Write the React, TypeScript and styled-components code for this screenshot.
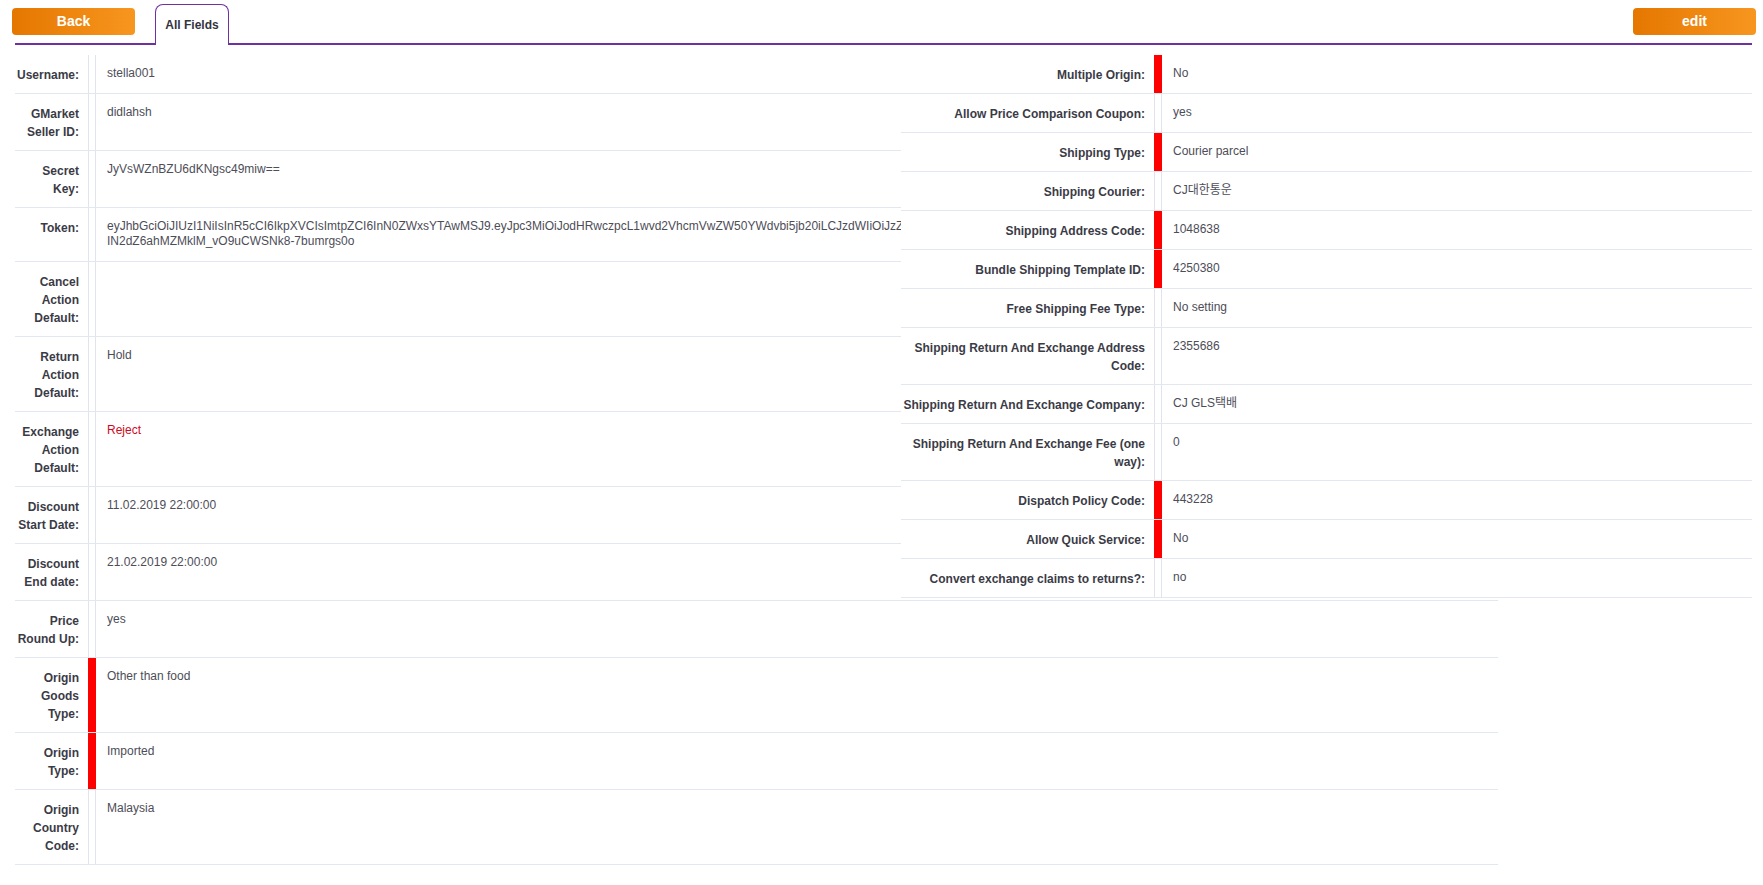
import React from "react";
import styled, { createGlobalStyle } from "styled-components";

const GlobalStyle = createGlobalStyle`
  html, body {
    margin: 0;
    padding: 0;
    background: #ffffff;
    font-family: "Liberation Sans", Arial, "Noto Sans CJK KR", sans-serif;
  }
  * { box-sizing: border-box; }
`;

const Page = styled.div`
  width: 100%;
  padding-bottom: 20px;
`;

const Header = styled.div`
  display: flex;
  align-items: flex-start;
  height: 45px;
  margin: 0 11px 0 15px;
  border-bottom: 2px solid #7030a0;
`;

const ActionButton = styled.button<{ $edge: "left" | "right" }>`
  width: 123px;
  height: 27px;
  margin-top: 8px;
  ${(p) => (p.$edge === "left" ? "margin-left: -3px;" : "margin-left: auto; margin-right: -4px;")}
  border: none;
  border-radius: 4px;
  background: linear-gradient(to right, #e57700, #f7961f);
  color: #ffffff;
  font-family: "Liberation Sans", Arial, sans-serif;
  font-weight: bold;
  font-size: 14px;
  line-height: 27px;
  padding: 0 0 4px;
  cursor: pointer;
`;

const Tab = styled.div`
  margin-left: 20px;
  margin-top: 4px;
  height: 41px;
  width: 74px;
  border: 1.5px solid #7030a0;
  border-bottom: none;
  border-radius: 8px 8px 0 0;
  background: #ffffff;
  color: #333340;
  font-weight: bold;
  font-size: 12px;
  display: flex;
  justify-content: center;
  padding-top: 13px;
  position: relative;
  z-index: 1;
`;

const Layout = styled.div`
  display: grid;
  grid-template-columns: 886px 597px 254px;
  margin: 10px 11px 0 15px;
  align-items: start;
`;

const LeftTable = styled.div`
  grid-column: 1 / 3;
  grid-row: 1;
`;

const RightTable = styled.div`
  grid-column: 2 / 4;
  grid-row: 1;
  background: #ffffff;
  position: relative;
  z-index: 1;
`;

const Row = styled.div<{ $labelWidth: number }>`
  display: grid;
  grid-template-columns: ${(p) => p.$labelWidth}px 8px 1fr;
  border-bottom: 1px solid #e3e7ef;
`;

const Label = styled.div<{ $padLeft: number }>`
  text-align: right;
  font-weight: bold;
  font-size: 12px;
  line-height: 18px;
  color: #3b3b46;
  padding: 11px 9px 9px ${(p) => p.$padLeft}px;
`;

const Marker = styled.div<{ $required: boolean }>`
  border-left: 1px solid ${(p) => (p.$required ? "#ff0000" : "#dfe4ee")};
  border-right: 1px solid ${(p) => (p.$required ? "#ff0000" : "#dfe4ee")};
  background: ${(p) => (p.$required ? "#ff0000" : "#ffffff")};
`;

const Value = styled.div<{ $alert?: boolean }>`
  min-width: 0;
  font-size: 12px;
  line-height: 15px;
  color: ${(p) => (p.$alert ? "#cc0a1e" : "#4d4d58")};
  padding: 11px 12px 12px 11px;
  overflow-wrap: anywhere;
`;

type Field = { label: string; value: string; required?: boolean; alert?: boolean };

const token =
  "eyJhbGciOiJIUzI1NiIsInR5cCI6IkpXVCIsImtpZCI6InN0ZWxsYTAwMSJ9.eyJpc3MiOiJodHRwczpcL1wvd2VhcmVwZW50YWdvbi5jb20iLCJzdWIiOiJzZWxsZXIiLCJhdWQiOiJzYS5lc21wbHVzLmNvbSIsIm5iZiI6MTU0OTg5MjAwMH0.rX3a" +
  "\u200B" +
  "IN2dZ6ahMZMklM_vO9uCWSNk8-7bumrgs0o";

const leftFields: Field[] = [
  { label: "Username:", value: "stella001" },
  { label: "GMarket Seller ID:", value: "didlahsh" },
  { label: "Secret Key:", value: "JyVsWZnBZU6dKNgsc49miw==" },
  { label: "Token:", value: token },
  { label: "Cancel Action Default:", value: "" },
  { label: "Return Action Default:", value: "Hold" },
  { label: "Exchange Action Default:", value: "Reject", alert: true },
  { label: "Discount Start Date:", value: "11.02.2019 22:00:00" },
  { label: "Discount End date:", value: "21.02.2019 22:00:00" },
  { label: "Price Round Up:", value: "yes" },
  { label: "Origin Goods Type:", value: "Other than food", required: true },
  { label: "Origin Type:", value: "Imported", required: true },
  { label: "Origin Country Code:", value: "Malaysia" },
];

const rightFields: Field[] = [
  { label: "Multiple Origin:", value: "No", required: true },
  { label: "Allow Price Comparison Coupon:", value: "yes" },
  { label: "Shipping Type:", value: "Courier parcel", required: true },
  { label: "Shipping Courier:", value: "CJ대한통운" },
  { label: "Shipping Address Code:", value: "1048638", required: true },
  { label: "Bundle Shipping Template ID:", value: "4250380", required: true },
  { label: "Free Shipping Fee Type:", value: "No setting" },
  { label: "Shipping Return And Exchange Address Code:", value: "2355686" },
  { label: "Shipping Return And Exchange Company:", value: "CJ GLS택배" },
  { label: "Shipping Return And Exchange Fee (one way):", value: "0" },
  { label: "Dispatch Policy Code:", value: "443228", required: true },
  { label: "Allow Quick Service:", value: "No", required: true },
  { label: "Convert exchange claims to returns?:", value: "no" },
];

const FieldRows: React.FC<{ fields: Field[]; labelWidth: number; padLeft: number }> = ({
  fields,
  labelWidth,
  padLeft,
}) => (
  <>
    {fields.map((f) => (
      <Row key={f.label} $labelWidth={labelWidth}>
        <Label $padLeft={padLeft}>{f.label}</Label>
        <Marker $required={!!f.required} />
        <Value $alert={f.alert}>{f.value}</Value>
      </Row>
    ))}
  </>
);

export default function App() {
  return (
    <Page>
      <GlobalStyle />
      <Header>
        <ActionButton $edge="left">Back</ActionButton>
        <Tab>All Fields</Tab>
        <ActionButton $edge="right">edit</ActionButton>
      </Header>
      <Layout>
        <LeftTable>
          <FieldRows fields={leftFields} labelWidth={73} padLeft={0} />
        </LeftTable>
        <RightTable>
          <FieldRows fields={rightFields} labelWidth={253} padLeft={0} />
        </RightTable>
      </Layout>
    </Page>
  );
}
